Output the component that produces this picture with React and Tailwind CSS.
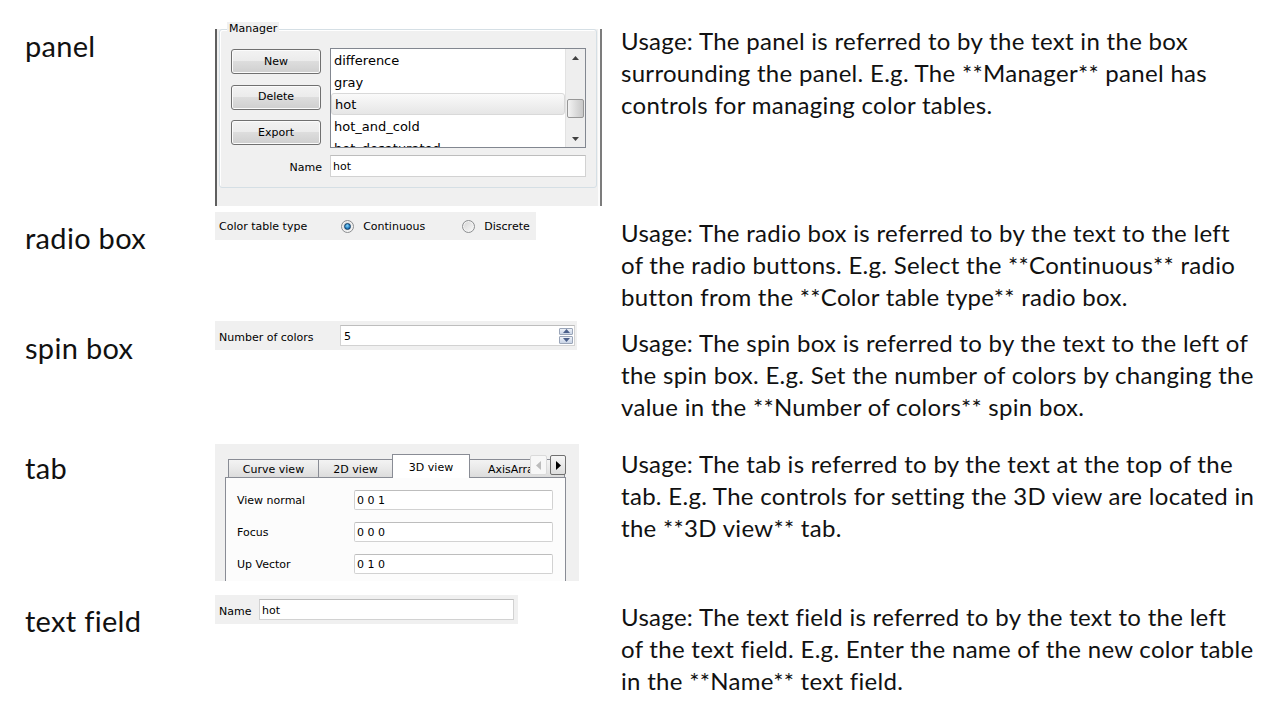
const ui = "font-['DejaVu_Sans',sans-serif] text-[11px] text-black";

const colorTables = ['difference', 'gray', 'hot', 'hot_and_cold', 'hot_desaturated'];

const rows = [
  {
    label: 'panel',
    rowClass: 'h-[200px]',
    labelClass: 'pt-[30px]',
    widgetClass: 'pt-[17px]',
    textClass: 'pt-[25px]',
    lines: [
      'Usage: The panel is referred to by the text in the box',
      'surrounding the panel. E.g. The **Manager** panel has',
      'controls for managing color tables.',
    ],
    widget: 'panel',
  },
  {
    label: 'radio box',
    rowClass: 'h-[118px]',
    labelClass: 'pt-[22px]',
    widgetClass: 'pt-[12px]',
    textClass: 'pt-[17px]',
    lines: [
      'Usage: The radio box is referred to by the text to the left',
      'of the radio buttons. E.g. Select the **Continuous** radio',
      'button from the **Color table type** radio box.',
    ],
    widget: 'radio',
  },
  {
    label: 'spin box',
    rowClass: 'h-[122px]',
    labelClass: 'pt-[14px]',
    widgetClass: 'pt-[3px]',
    textClass: 'pt-[9px]',
    lines: [
      'Usage: The spin box is referred to by the text to the left of',
      'the spin box. E.g. Set the number of colors by changing the',
      'value in the **Number of colors** spin box.',
    ],
    widget: 'spin',
  },
  {
    label: 'tab',
    rowClass: 'h-[150px]',
    labelClass: 'pt-[12px]',
    widgetClass: 'pt-[4px]',
    textClass: 'pt-[8px]',
    lines: [
      'Usage: The tab is referred to by the text at the top of the',
      'tab. E.g. The controls for setting the 3D view are located in',
      'the **3D view** tab.',
    ],
    widget: 'tab',
  },
  {
    label: 'text field',
    rowClass: 'h-[130px]',
    labelClass: 'pt-[15px]',
    widgetClass: 'pt-[5px]',
    textClass: 'pt-[11px]',
    lines: [
      'Usage: The text field is referred to by the text to the left',
      'of the text field. E.g. Enter the name of the new color table',
      'in the **Name** text field.',
    ],
    widget: 'text',
  },
];

function Button({ children }) {
  return (
    <div className="h-[25px] w-[90px] flex items-center justify-center pt-[1px] rounded-[3px] border border-[#707070] bg-[linear-gradient(#f2f2f2,#ebebeb_50%,#dddddd_50%,#cfcfcf)] shadow-[inset_0_0_0_1px_#fbfbfb]">
      {children}
    </div>
  );
}

function Arrow({ up, color = '#404040' }) {
  return (
    <svg width="7" height="4" viewBox="0 0 7 4">
      <polygon points={up ? '3.5,0 7,4 0,4' : '0,0 7,0 3.5,4'} fill={color} />
    </svg>
  );
}

function Field({ className, children }) {
  return (
    <div className={`bg-white border border-[#d2d2d2] border-t-[#bdbdbd] flex items-center pl-[2px] ${className}`}>
      {children}
    </div>
  );
}

function Radio({ checked }) {
  return (
    <span className="w-[13px] h-[13px] shrink-0 rounded-full border border-[#8c8e90] bg-[linear-gradient(135deg,#d4d4d4,#fafafa)] shadow-[inset_0_0_0_1px_#f4f4f4] flex items-center justify-center">
      {checked && (
        <span className="w-[7px] h-[7px] rounded-full border border-[#0f3d66] bg-[radial-gradient(circle_at_45%_35%,#8ad8fa,#2a84c6_55%,#0d4a82)]" />
      )}
    </span>
  );
}

function PanelWidget() {
  return (
    <div className="w-[387px] h-[177px] bg-[#f0f0f0] border-l-2 border-l-[#5f5f5f] border-r-2 border-r-[#7c7c7c] shadow-[inset_-2px_0_0_#fcfcfc]">
      <div className="relative ml-[2px] mt-[12px] w-[378px] h-[159px] rounded-[3px] border border-[#d5dfe5] shadow-[inset_1px_1px_0_#ffffff] flex flex-col pl-[11px] pt-[18px]">
        <span className="absolute -top-[8px] left-[7px] px-[2px] bg-[#f0f0f0] leading-[14px]">Manager</span>
        <div className="flex gap-[9px]">
          <div className="flex flex-col gap-[10.5px] mt-[1px]">
            <Button>New</Button>
            <Button>Delete</Button>
            <Button>Export</Button>
          </div>
          <div className="w-[256px] h-[100px] border border-[#828790] bg-white flex">
            <div className="flex-1 overflow-hidden text-[13px] leading-[20px]">
              {colorTables.map((name) => (
                <div
                  key={name}
                  className={`h-[22px] pl-[3px] pt-[2px] whitespace-nowrap ${
                    name === 'hot'
                      ? 'rounded-[3px] border border-[#d9d9d9] bg-[linear-gradient(#fafafa,#e6e6e6)] pl-[2px] pt-px'
                      : ''
                  }`}
                >
                  {name}
                </div>
              ))}
            </div>
            <div className="w-[20px] bg-[#eeeeee] border-l border-[#e2e2e2] flex flex-col items-center">
              <div className="h-[17px] w-full flex items-center justify-center">
                <Arrow up />
              </div>
              <div className="h-[33px]" />
              <div className="h-[19px] w-[17px] rounded-[2px] border border-[#979797] bg-[linear-gradient(90deg,#f3f3f3,#d8d8d8_60%,#c8c8c8)]" />
              <div className="flex-1" />
              <div className="h-[17px] w-full flex items-center justify-center">
                <Arrow />
              </div>
            </div>
          </div>
        </div>
        <div className="flex items-center mt-[7px]">
          <span className="w-[99px] pr-[8px] text-right translate-y-[2px]">Name</span>
          <Field className="w-[256px] h-[22px]">
            <span className="translate-y-[1px]">hot</span>
          </Field>
        </div>
      </div>
    </div>
  );
}

function RadioWidget() {
  return (
    <div className="w-[321px] h-[28px] bg-[#f0f0f0] flex items-center pl-[4px] whitespace-nowrap">
      <span className="translate-y-[1px]">Color table type</span>
      <label className="flex items-center gap-[9px] ml-[34px]">
        <Radio checked />
        <span className="translate-y-[1px]">Continuous</span>
      </label>
      <label className="flex items-center gap-[9px] ml-[37px]">
        <Radio />
        <span className="translate-y-[1px]">Discrete</span>
      </label>
    </div>
  );
}

function SpinWidget() {
  return (
    <div className="w-[362px] h-[29px] bg-[#f0f0f0] flex items-center pl-[4px]">
      <span className="w-[121px] translate-y-[3px]">Number of colors</span>
      <Field className="w-[235px] h-[21px] pr-[1px]">
        <span className="flex-1 pl-[1px] translate-y-[2px]">5</span>
        <div className="flex flex-col gap-[1px]">
          <div className="w-[14px] h-[7.5px] rounded-[1px] border border-[#9aa5b8] bg-[linear-gradient(#eef2f8,#c9d4e6)] flex items-center justify-center">
            <Arrow up color="#4a5f8a" />
          </div>
          <div className="w-[14px] h-[7.5px] rounded-[1px] border border-[#9aa5b8] bg-[linear-gradient(#eef2f8,#c9d4e6)] flex items-center justify-center">
            <Arrow color="#4a5f8a" />
          </div>
        </div>
      </Field>
    </div>
  );
}

const tabs = [
  { name: 'Curve view', w: 'w-[91px]' },
  { name: '2D view', w: 'w-[75px]' },
  { name: '3D view', w: 'w-[78px]', active: true },
  { name: 'AxisArrays', w: 'w-[96px]' },
];

const tabRows = [
  ['View normal', '0 0 1'],
  ['Focus', '0 0 0'],
  ['Up Vector', '0 1 0'],
];

function TabWidget() {
  return (
    <div className="w-[364px] h-[137px] bg-[#f0f0f0] pl-[10px] pt-[10px] flex flex-col overflow-hidden">
      <div className="relative w-[341px] h-[23px] flex items-end pl-[3px] z-10">
        {tabs.map((t) =>
          t.active ? (
            <div
              key={t.name}
              className={`${t.w} -ml-[1px] h-[24px] -mb-[1px] border border-b-0 border-[#898c95] bg-white flex items-start justify-center pt-[5px] whitespace-nowrap`}
            >
              {t.name}
            </div>
          ) : (
            <div
              key={t.name}
              className={`${t.w} -ml-[1px] first:ml-0 h-[18px] border border-b-0 border-[#898c95] bg-[linear-gradient(#f3f3f3,#e9e9e9_50%,#dcdcdc)] flex items-start justify-center pt-[2px] whitespace-nowrap overflow-hidden`}
            >
              {t.name}
            </div>
          )
        )}
        <div className="absolute right-[19px] top-[1px] w-[17px] h-[20px] rounded-[2px] border border-[#dadada] bg-[#f7f7f7] flex items-center justify-center">
          <svg width="5" height="9" viewBox="0 0 5 9">
            <polygon points="5,0 5,9 0,4.5" fill="#bcbcbc" />
          </svg>
        </div>
        <div className="absolute right-0 top-[1px] w-[16px] h-[20px] rounded-[2px] border border-[#707070] bg-[linear-gradient(#f6f6f6,#dedede)] flex items-center justify-center">
          <svg width="5" height="9" viewBox="0 0 5 9">
            <polygon points="0,0 5,4.5 0,9" fill="#000" />
          </svg>
        </div>
      </div>
      <div className="w-[341px] flex-1 border border-b-0 border-[#898c95] bg-[#fcfcfc] pl-[11px] pt-[12px] flex flex-col gap-[12px]">
        {tabRows.map(([label, value]) => (
          <div key={label} className="flex items-center h-[20px]">
            <span className="w-[117px] translate-y-[1px]">{label}</span>
            <Field className="w-[199px] h-[20px] rounded-[2px]">
              <span className="translate-y-[1px]">{value}</span>
            </Field>
          </div>
        ))}
      </div>
    </div>
  );
}

function TextWidget() {
  return (
    <div className="w-[303px] h-[29px] bg-[#f0f0f0] flex items-center pl-[4px]">
      <span className="w-[40px] translate-y-[3px]">Name</span>
      <Field className="w-[255px] h-[21px]">
        <span className="translate-y-[2px]">hot</span>
      </Field>
    </div>
  );
}

const widgets = {
  panel: <PanelWidget />,
  radio: <RadioWidget />,
  spin: <SpinWidget />,
  tab: <TabWidget />,
  text: <TextWidget />,
};

export default function App() {
  return (
    <div className="w-[1280px] h-[720px] bg-white overflow-hidden flex flex-col text-[#111]">
      {rows.map((row) => (
        <div key={row.label} className={`flex shrink-0 ${row.rowClass}`}>
          <div className={`w-[215px] shrink-0 pl-[25px] font-['Lato',sans-serif] text-[29px] leading-[32px] tracking-[0.3px] ${row.labelClass}`}>
            {row.label}
          </div>
          <div className={`w-[406px] shrink-0 ${ui} ${row.widgetClass}`}>{widgets[row.widget]}</div>
          <div className={`flex-1 font-['Lato',sans-serif] text-[24px] leading-[32px] tracking-[0.3px] whitespace-nowrap ${row.textClass}`}>
            {row.lines.map((line) => (
              <div key={line}>{line}</div>
            ))}
          </div>
        </div>
      ))}
    </div>
  );
}
